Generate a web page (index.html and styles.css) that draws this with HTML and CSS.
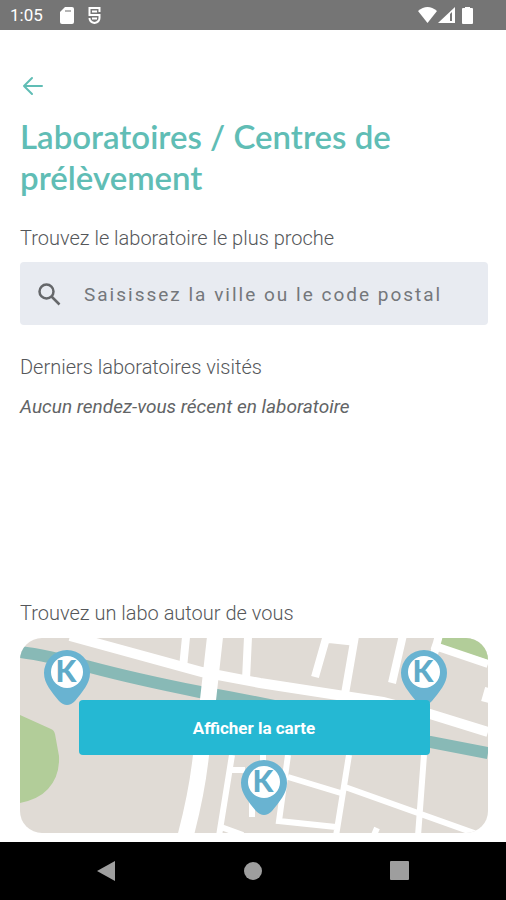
FILE: index.html
```
<!DOCTYPE html>
<html lang="fr">
<head>
    <meta charset="UTF-8">
    <meta name="viewport" content="width=device-width, initial-scale=1.0">
    <title>Laboratoires / Centres de prélèvement</title>
    <link rel="stylesheet" href="styles.css">
</head>
<body>
    <div class="status-bar">
        <span class="time">1:05</span>
        <svg width="14" height="17" viewBox="0 0 14 17"><path fill="#fff" d="M5 0h7q2 0 2 2v13q0 2-2 2H2q-2 0-2-2V5z"/><path fill="#b5b5b5" d="M5 3h6v2H5z"/></svg>
        <svg class="sync" width="13" height="17" viewBox="0 0 13 17" fill="none" stroke="#fff" stroke-width="2"><path d="M11.500 5V1h-10v7h10v3q0 4-5 5-5-1-5-5M4 4.500h5M4 11.500h5"/></svg>
        <svg class="wifi" width="19" height="16" viewBox="0 0 19 16"><path fill="#fff" d="M0 4q9.500-8 19 0L9.500 16z"/></svg>
        <svg width="17" height="16" viewBox="0 0 17 16"><path fill="#fff" fill-rule="evenodd" d="M17 0v16H0zM12 7v7h2V5z"/></svg>
        <svg class="battery" width="11" height="17" viewBox="0 0 11 17"><path fill="#fff" d="M3 0h5v1h2q1 0 1 1v14q0 1-1 1H1q-1 0-1-1V2q0-1 1-1h2z"/></svg>
    </div>

    <main class="container">
        <button class="back" type="button" aria-label="Retour">
            <svg width="22" height="20" viewBox="0 0 22 20" fill="none" stroke="#60bdb5" stroke-width="2" stroke-linecap="round" stroke-linejoin="round"><path d="M20 10H2M10 2L2 10l8 8"/></svg>
        </button>
        <h1>Laboratoires / Centres de prélèvement</h1>

        <label class="label" for="search">Trouvez le laboratoire le plus proche</label>
        <div class="search">
            <svg width="23" height="23" viewBox="0 0 23 23" fill="none" stroke="#65676a" stroke-width="2.500"><circle cx="8.500" cy="8.500" r="7"/><path d="M13.500 13.500l8 8"/></svg>
            <input type="text" id="search" placeholder="Saisissez la ville ou le code postal">
        </div>

        <h2 class="label">Derniers laboratoires visités</h2>
        <p class="empty">Aucun rendez-vous récent en laboratoire</p>

        <h2 class="label around">Trouvez un labo autour de vous</h2>
        <div class="map">
            <svg class="map-picture" viewBox="0 0 468 195" preserveAspectRatio="xMidYMid slice">
                <rect width="468" height="195" fill="#e0dbd5"/>
                <!-- parcs -->
                <path fill="#b2cd99" d="M0 77l31 14q3 1 4 5l4 22q1 20-11 33-9 10-28 14zM422 0l-2 7 48 15V0z"/>
                <!-- rivière -->
                <path fill="none" stroke="#88b9b6" stroke-width="12" d="M0 14Q25 17 70 29T180 54Q300 75 410 104L468 115"/>
                <!-- rues -->
                <g fill="none" stroke="#fff">
                    <path stroke-width="16" d="M195-1L188 62 181 117Q177 155 165 200"/>
                    <path stroke-width="10" d="M50-2L182 34 240 45 363 64 410 76 468 94"/>
                    <path stroke-width="8" d="M166-1l-3 31M228-1l-2 43M307-3l-12 42M335-2l-10 58M383-3l-11 48M419-3l-6 23M412 7l56 19M309 1l28 3M469 50l-4 14"/>
                    <path stroke-width="6" d="M212 117L199 198M211 132h14M232 155v24M243 117v10M268 117l-9 66 57 6M329 117l-13 81M268 139l56 17M325 149l143 51M404 117l-6 81M201 189l22 8M357 190l-3 7"/>
                </g>
                <g fill="#69b3d1">
                    <path id="pin" d="M47 12a23 23 0 0 1 23 23c0 11-8 19-15 28q-8 8-16 0C32 54 24 46 24 35a23 23 0 0 1 23-23z"/>
                    <use href="#pin" x="357"/>
                    <use href="#pin" x="197" y="110"/>
                </g>
                <g fill="#fff">
                    <circle cx="47" cy="34" r="16"/>
                    <circle cx="404" cy="34" r="16"/>
                    <circle cx="244" cy="144" r="16"/>
                </g>
                <g class="pin-letter">
                    <text x="46" y="44">K</text>
                    <text x="403" y="44">K</text>
                    <text x="243" y="154">K</text>
                </g>
            </svg>
            <button class="show-map" type="button">Afficher la carte</button>
        </div>
    </main>

    <nav class="nav-bar">
        <button type="button" aria-label="Précédent"><svg width="20" height="22" viewBox="0 0 20 22"><path fill="#9e9e9e" d="M19 1v20L1 11z"/></svg></button>
        <button type="button" aria-label="Accueil"><svg width="20" height="20" viewBox="0 0 20 20"><circle fill="#9e9e9e" cx="10" cy="10" r="9"/></svg></button>
        <button type="button" aria-label="Applications récentes"><svg width="20" height="20" viewBox="0 0 20 20"><rect fill="#9e9e9e" width="19" height="19" rx="1"/></svg></button>
    </nav>
</body>
</html>
```
FILE: styles.css
```
* {
    box-sizing: border-box;
}
body {
    font-family: Roboto, Arial, sans-serif;
    margin: 0;
    min-height: 100vh;
    display: flex;
    flex-direction: column;
    background-color: #fff;
    color: #55575a;
}
button {
    border: none;
    padding: 0;
    background: none;
    font-family: inherit;
    cursor: pointer;
}
svg {
    display: block;
}
.status-bar {
    display: flex;
    align-items: center;
    height: 30px;
    padding: 0 33px 0 10px;
    background: #757575;
    color: #fff;
}
.time {
    width: 50px;
    font-size: 17px;
}
.sync {
    margin-left: 14px;
}
.wifi {
    margin-left: auto;
    margin-right: 1px;
}
.battery {
    margin-left: 7px;
}
.container {
    flex: 1;
    display: flex;
    flex-direction: column;
    padding: 46px 18px 9px 20px;
}
.back {
    align-self: flex-start;
    padding: 0 2px;
}
h1 {
    margin: 20px 0 25px;
    font-family: Lato, sans-serif;
    font-size: 33px;
    font-weight: 600;
    line-height: 41px;
    color: #60bdb5;
}
.label {
    margin: 0;
    font-size: 20px;
    font-weight: 300;
    line-height: 30px;
}
.search {
    display: flex;
    align-items: center;
    gap: 23px;
    height: 63px;
    margin: 9px 0 27px;
    padding: 2px 18px 0;
    border-radius: 4px;
    background: #e8ebf1;
}
.search svg {
    flex: none;
}
.search input {
    flex: 1;
    min-width: 0;
    padding: 0;
    border: none;
    outline: none;
    background: none;
    font-family: inherit;
    font-size: 19px;
    letter-spacing: 2px;
    color: #626466;
}
.search input::placeholder {
    color: #74777b;
}
.empty {
    margin: 10px 0;
    font-size: 19px;
    font-style: italic;
    line-height: 30px;
    color: #626466;
}
.around {
    margin-top: auto;
    margin-bottom: 10px;
}
.map {
    display: grid;
    border-radius: 22px;
    overflow: hidden;
}
.map-picture,
.show-map {
    grid-area: 1 / 1;
}
.map-picture {
    width: 100%;
}
.pin-letter {
    font-family: Lato, sans-serif;
    font-size: 30px;
    font-weight: 900;
    text-anchor: middle;
    fill: #5fabc9;
}
.show-map {
    place-self: center;
    width: 75%;
    height: 55px;
    margin-bottom: 16px;
    border-radius: 4px;
    background: #25b8d3;
    color: #fff;
    font-size: 17px;
    font-weight: 700;
}
.nav-bar {
    display: flex;
    justify-content: space-between;
    align-items: center;
    height: 58px;
    padding: 0 19%;
    background: #000;
}
```
